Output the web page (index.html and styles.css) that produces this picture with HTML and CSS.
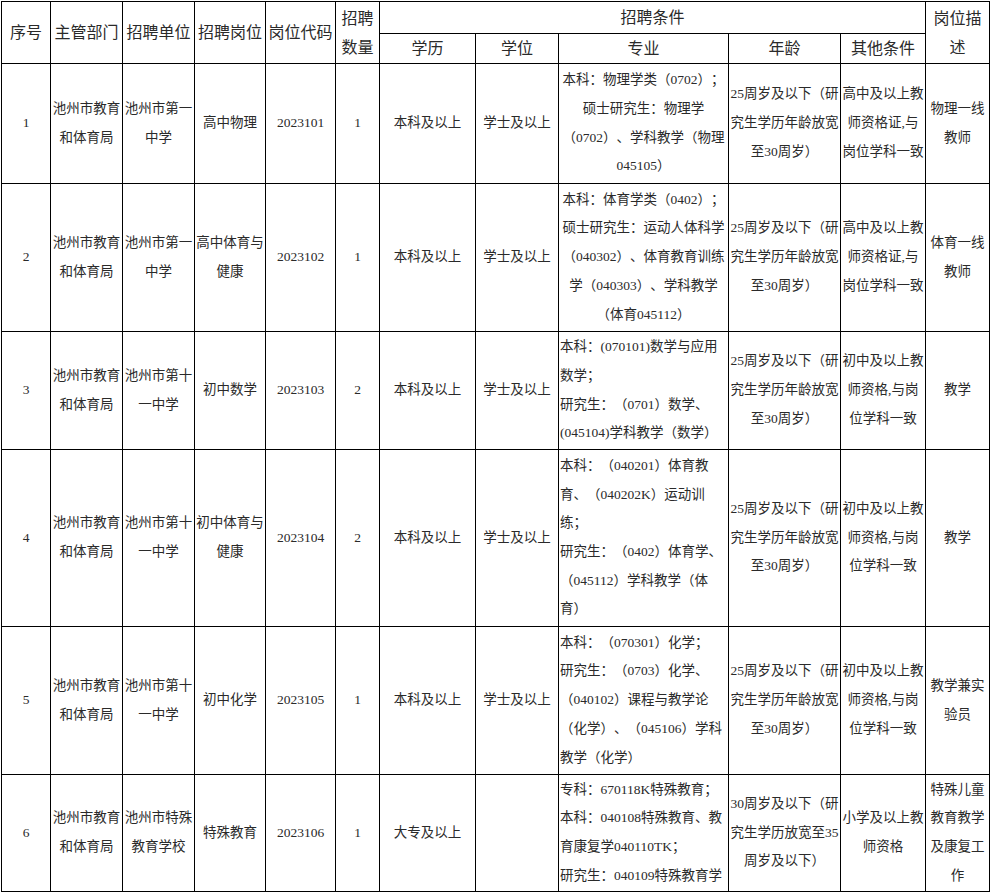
FILE: index.html
```html
<!DOCTYPE html>
<html lang="zh-CN">
<head>
<meta charset="utf-8">
<title>岗位表</title>
<link rel="stylesheet" href="styles.css">
</head>
<body>
<table class="jobs">
  <colgroup>
    <col class="w-no">
    <col class="w-dept">
    <col class="w-unit">
    <col class="w-post">
    <col class="w-code">
    <col class="w-num">
    <col class="w-edu">
    <col class="w-degree">
    <col class="w-major">
    <col class="w-age">
    <col class="w-other">
    <col class="w-desc">
  </colgroup>
  <thead>
    <tr class="head-top">
      <th rowspan="2">序号</th>
      <th rowspan="2">主管部门</th>
      <th rowspan="2">招聘单位</th>
      <th rowspan="2">招聘岗位</th>
      <th rowspan="2">岗位代码</th>
      <th rowspan="2">招聘<br>数量</th>
      <th colspan="5">招聘条件</th>
      <th rowspan="2">岗位描<br>述</th>
    </tr>
    <tr class="head-sub">
      <th>学历</th>
      <th>学位</th>
      <th>专业</th>
      <th>年龄</th>
      <th>其他条件</th>
    </tr>
  </thead>
  <tbody>
    <tr class="r-120">
      <td>1</td>
      <td>池州市教育<br>和体育局</td>
      <td>池州市第一<br>中学</td>
      <td>高中物理</td>
      <td>2023101</td>
      <td>1</td>
      <td>本科及以上</td>
      <td>学士及以上</td>
      <td class="major centered">本科：物理学类（0702）；<br>硕士研究生：物理学<br>（0702）、学科教学（物理<br>045105）</td>
      <td>25周岁及以下（研<br>究生学历年龄放宽<br>至30周岁）</td>
      <td>高中及以上教<br>师资格证,与<br>岗位学科一致</td>
      <td>物理一线<br>教师</td>
    </tr>
    <tr class="r-148">
      <td>2</td>
      <td>池州市教育<br>和体育局</td>
      <td>池州市第一<br>中学</td>
      <td>高中体育与<br>健康</td>
      <td>2023102</td>
      <td>1</td>
      <td>本科及以上</td>
      <td>学士及以上</td>
      <td class="major centered">本科：体育学类（0402）；<br>硕士研究生：运动人体科学<br>（040302）、体育教育训练<br>学（040303）、学科教学<br>（体育045112）</td>
      <td>25周岁及以下（研<br>究生学历年龄放宽<br>至30周岁）</td>
      <td>高中及以上教<br>师资格证,与<br>岗位学科一致</td>
      <td>体育一线<br>教师</td>
    </tr>
    <tr class="r-118">
      <td>3</td>
      <td>池州市教育<br>和体育局</td>
      <td>池州市第十<br>一中学</td>
      <td>初中数学</td>
      <td>2023103</td>
      <td>2</td>
      <td>本科及以上</td>
      <td>学士及以上</td>
      <td class="major">本科：(070101)数学与应用<br>数学；<br>研究生：（0701）数学、<br>(045104)学科教学（数学）</td>
      <td>25周岁及以下（研<br>究生学历年龄放宽<br>至30周岁）</td>
      <td>初中及以上教<br>师资格,与岗<br>位学科一致</td>
      <td>教学</td>
    </tr>
    <tr class="r-177">
      <td>4</td>
      <td>池州市教育<br>和体育局</td>
      <td>池州市第十<br>一中学</td>
      <td>初中体育与<br>健康</td>
      <td>2023104</td>
      <td>2</td>
      <td>本科及以上</td>
      <td>学士及以上</td>
      <td class="major">本科：（040201）体育教<br>育、（040202K）运动训<br>练；<br>研究生：（0402）体育学、<br>（045112）学科教学（体<br>育）</td>
      <td>25周岁及以下（研<br>究生学历年龄放宽<br>至30周岁）</td>
      <td>初中及以上教<br>师资格,与岗<br>位学科一致</td>
      <td>教学</td>
    </tr>
    <tr class="r-148">
      <td>5</td>
      <td>池州市教育<br>和体育局</td>
      <td>池州市第十<br>一中学</td>
      <td>初中化学</td>
      <td>2023105</td>
      <td>1</td>
      <td>本科及以上</td>
      <td>学士及以上</td>
      <td class="major">本科：（070301）化学；<br>研究生：（0703）化学、<br>（040102）课程与教学论<br>（化学）、（045106）学科<br>教学（化学）</td>
      <td>25周岁及以下（研<br>究生学历年龄放宽<br>至30周岁）</td>
      <td>初中及以上教<br>师资格,与岗<br>位学科一致</td>
      <td>教学兼实<br>验员</td>
    </tr>
    <tr class="r-117">
      <td>6</td>
      <td>池州市教育<br>和体育局</td>
      <td>池州市特殊<br>教育学校</td>
      <td>特殊教育</td>
      <td>2023106</td>
      <td>1</td>
      <td>大专及以上</td>
      <td></td>
      <td class="major">专科：670118K特殊教育；<br>本科：040108特殊教育、教<br>育康复学040110TK；<br>研究生：040109特殊教育学</td>
      <td>30周岁及以下（研<br>究生学历放宽至35<br>周岁及以下）</td>
      <td>小学及以上教<br>师资格</td>
      <td>特殊儿童<br>教育教学<br>及康复工<br>作</td>
    </tr>
  </tbody>
</table>
</body>
</html>
```

FILE: styles.css
```css
html, body {
  margin: 0;
  padding: 0;
  background: #ffffff;
}

.jobs {
  margin: 1px 0 0 1px;
  width: 989px;
  table-layout: fixed;
  border-collapse: collapse;
  font-family: "Liberation Serif", "Noto Sans CJK SC", serif;
  color: #2a2a2a;
  text-spacing-trim: space-all;
}

.w-no { width: 49px; }
.w-dept { width: 72px; }
.w-unit { width: 72px; }
.w-post { width: 71px; }
.w-code { width: 70px; }
.w-num { width: 44px; }
.w-edu { width: 96px; }
.w-degree { width: 83px; }
.w-major { width: 170px; }
.w-age { width: 112px; }
.w-other { width: 85px; }
.w-desc { width: 64px; }

.jobs th,
.jobs td {
  border: 1px solid #000;
  padding: 0;
  text-align: center;
  vertical-align: middle;
  white-space: nowrap;
  overflow: hidden;
}

.jobs th {
  font-weight: normal;
  font-size: 16px;
  line-height: 29px;
}

.head-top { height: 32px; }
.head-sub { height: 30px; }

.jobs td {
  font-size: 13.5px;
  line-height: 28.7px;
}

.r-120 { height: 120px; }
.r-148 { height: 148px; }
.r-118 { height: 118px; }
.r-177 { height: 177px; }
.r-117 { height: 117px; }

.jobs td.major {
  text-align: left;
  padding-left: 1px;
}

.jobs td.major.centered {
  text-align: center;
  padding-left: 0;
}
```
